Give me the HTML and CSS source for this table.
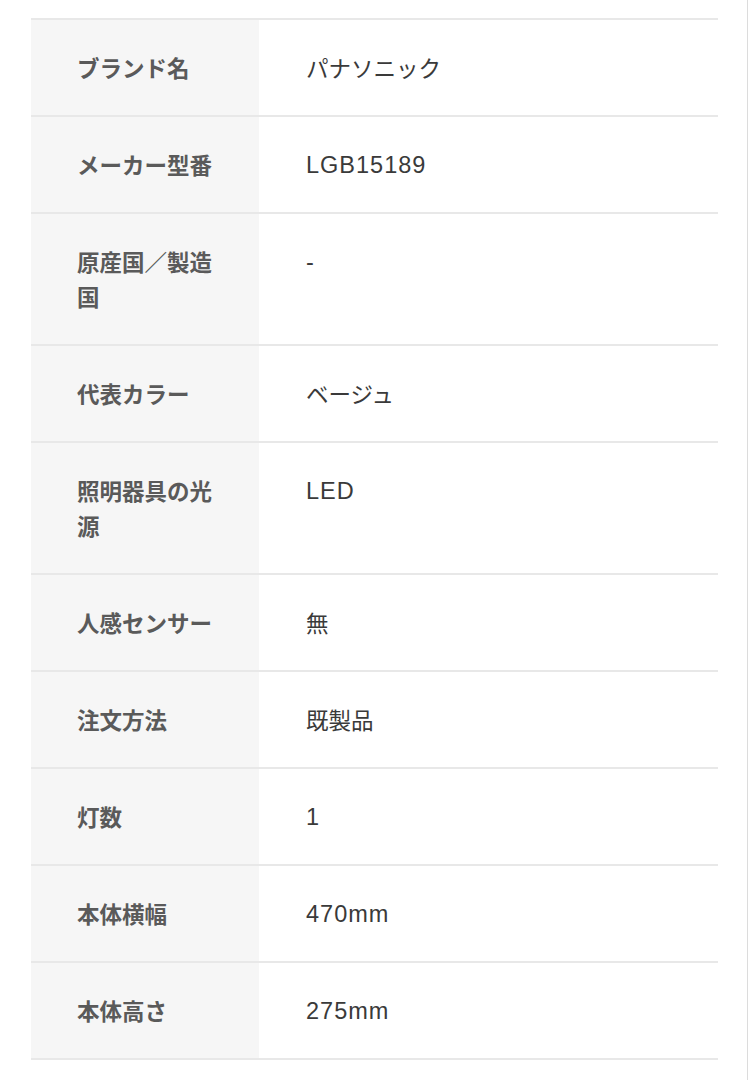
FILE: index.html
```html
<!DOCTYPE html>
<html lang="ja">
<head>
<meta charset="utf-8">
<link rel="stylesheet" href="styles.css">
</head>
<body>
<div class="page">
  <table class="spec">
    <tbody>
      <tr><th>ブランド名</th><td>パナソニック</td></tr>
      <tr><th>メーカー型番</th><td class="en">LGB15189</td></tr>
      <tr><th>原産国／製造国</th><td class="en">-</td></tr>
      <tr><th>代表カラー</th><td>ベージュ</td></tr>
      <tr><th>照明器具の光源</th><td class="en">LED</td></tr>
      <tr><th>人感センサー</th><td>無</td></tr>
      <tr><th>注文方法</th><td>既製品</td></tr>
      <tr><th>灯数</th><td class="en">1</td></tr>
      <tr><th>本体横幅</th><td class="en">470mm</td></tr>
      <tr><th>本体高さ</th><td class="en">275mm</td></tr>
    </tbody>
  </table>
</div>
</body>
</html>
```
FILE: styles.css
```css
html, body {
  margin: 0;
  padding: 0;
  background: #fff;
}
.page {
  width: 748px;
  min-height: 1080px;
  border-right: 1px solid #dcdcdc;
  padding: 18px 0 0 31px;
  box-sizing: border-box;
  font-family: "Noto Sans CJK JP", "Noto Sans", sans-serif;
}
.spec {
  width: 687px;
  border-collapse: collapse;
  border-top: 2px solid #e8e8e8;
}
.spec tr {
  border-bottom: 2px solid #e8e8e8;
}
.spec th, .spec td {
  font-size: 22.5px;
  line-height: 35px;
  padding: 30px 40px 30px 46px;
  vertical-align: top;
  text-align: left;
}
.spec th {
  width: 142px;
  background: #f6f6f6;
  color: #5a5a5a;
  font-weight: 700;
}
.spec td {
  color: #3a3a3a;
  font-weight: 400;
  padding-left: 47px;
}
.spec td.en {
  font-family: "Liberation Sans", "Noto Sans CJK JP", sans-serif;
  font-size: 23.5px;
  letter-spacing: 1px;
  padding-top: 31px;
  padding-bottom: 29px;
}
```
